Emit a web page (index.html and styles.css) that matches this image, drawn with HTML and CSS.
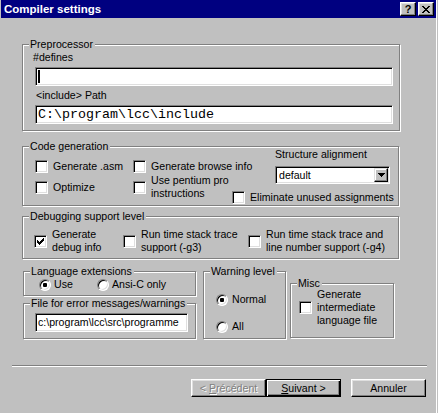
FILE: index.html
```html
<!DOCTYPE html>
<html lang="en">
<head>
    <meta charset="UTF-8">
    <title>Compiler settings</title>
    <link rel="stylesheet" href="styles.css">
</head>
<body>
    <div class="window">
        <div class="titlebar">
            <span class="title">Compiler settings</span>
            <span class="tb-btn help">?</span>
            <span class="tb-btn close">
                <svg width="8" height="7" viewBox="0 0 8 7"><path d="M0 0h2l2 2.5 2-2.5h2l-3 3.5 3 3.5h-2l-2-2.5-2 2.5h-2l3-3.5z"/></svg>
            </span>
        </div>

        <div class="groups">
            <div class="group pre">
                <div class="group-title">Preprocessor</div>
                <div class="group-body">
                    <div class="field-label">#defines</div>
                    <div class="textbox mono"><span class="caret"></span></div>
                    <div class="field-label inc">&lt;include&gt; Path</div>
                    <div class="textbox mono">C:\program\lcc\include</div>
                </div>
            </div>

            <div class="group codegen">
                <div class="group-title">Code generation</div>
                <div class="group-body">
                    <div class="cg-checks">
                        <div class="check-item"><span class="check"></span><span>Generate .asm</span></div>
                        <div class="check-item"><span class="check"></span><span>Generate browse info</span></div>
                        <div class="check-item"><span class="check"></span><span>Optimize</span></div>
                        <div class="check-item"><span class="check"></span><span>Use pentium pro<br>instructions</span></div>
                    </div>
                    <div class="cg-side">
                        <div>Structure alignment</div>
                        <div class="select">
                            <span class="select-value">default</span>
                            <span class="select-btn">
                                <svg width="7" height="4" viewBox="0 0 7 4"><path d="M0 0h7l-3.5 4z"/></svg>
                            </span>
                        </div>
                        <div class="check-item elim"><span class="check"></span><span>Eliminate unused assignments</span></div>
                    </div>
                </div>
            </div>

            <div class="group debug">
                <div class="group-title">Debugging support level</div>
                <div class="group-body">
                    <div class="check-item">
                        <span class="check">
                            <svg width="11" height="11" viewBox="0 0 11 11"><path transform="translate(2 2)" d="M0 2h1v1h1v1h1v-1h1v-1h1v-1h1v-1h1v3h-1v1h-1v1h-1v1h-1v1h-1v-1h-1v-1h-1z"/></svg>
                        </span>
                        <span>Generate<br>debug info</span>
                    </div>
                    <div class="check-item"><span class="check"></span><span>Run time stack trace<br>support (-g3)</span></div>
                    <div class="check-item"><span class="check"></span><span>Run time stack trace and<br>line number support (-g4)</span></div>
                </div>
            </div>

            <div class="bottom-row">
                <div class="left-col">
                    <div class="group lang">
                        <div class="group-title">Language extensions</div>
                        <div class="group-body">
                            <div class="radio-item use"><span class="radio on"></span><span>Use</span></div>
                            <div class="radio-item"><span class="radio"></span><span>Ansi-C only</span></div>
                        </div>
                    </div>
                    <div class="group errfile">
                        <div class="group-title">File for error messages/warnings</div>
                        <div class="group-body">
                            <div class="textbox">c:\program\lcc\src\programme</div>
                        </div>
                    </div>
                </div>

                <div class="group warn">
                    <div class="group-title">Warning level</div>
                    <div class="group-body">
                        <div class="radio-item normal"><span class="radio on"></span><span>Normal</span></div>
                        <div class="radio-item all"><span class="radio"></span><span>All</span></div>
                    </div>
                </div>

                <div class="group misc">
                    <div class="group-title">Misc</div>
                    <div class="group-body">
                        <div class="check-item"><span class="check"></span><span>Generate<br>intermediate<br>language file</span></div>
                    </div>
                </div>
            </div>
        </div>

        <div class="separator"></div>

        <div class="buttons">
            <span class="btn disabled"><span>&lt; <u>P</u>récédent</span></span>
            <span class="btn default"><span><u>S</u>uivant &gt;</span></span>
            <span class="btn cancel"><span>Annuler</span></span>
        </div>
    </div>
</body>
</html>
```

FILE: styles.css
```css
body {
    margin: 0;
    background-color: #c0c0c0;
    font-family: "Liberation Sans", Arial, sans-serif;
    font-size: 10.6px;
    line-height: 13px;
    color: #000;
}
.window {
    width: 437px;
    height: 413px;
    border-right: 1px solid #fff;
    box-sizing: border-box;
    overflow: hidden;
}

/* title bar */
.titlebar {
    margin-left: 1px;
    width: 435px;
    height: 18px;
    background-color: #000080;
    display: flex;
    align-items: center;
    padding: 0 2px 0 3px;
    box-sizing: border-box;
}
.title {
    flex: 1;
    color: #fff;
    font-weight: bold;
    font-size: 11.5px;
}
.tb-btn {
    width: 16px;
    height: 14px;
    box-sizing: border-box;
    background-color: #c0c0c0;
    border: 1px solid;
    border-color: #fff #000 #000 #fff;
    box-shadow: inset -1px -1px #808080, inset 1px 1px #dfdfdf;
    display: flex;
    align-items: center;
    justify-content: center;
    font-weight: bold;
    font-size: 11px;
}
.tb-btn.close {
    margin-left: 2px;
}
.tb-btn svg {
    shape-rendering: crispEdges;
}

/* group boxes */
.groups {
    padding: 26px 0 0 22px;
}
.group {
    border: 1px solid #808080;
    box-shadow: inset 1px 1px #fff, 1px 1px #fff;
    box-sizing: border-box;
}
.group-title {
    width: fit-content;
    margin: -7px 0 0 6px;
    padding: 0 2px 0 1px;
    background-color: #c0c0c0;
    white-space: nowrap;
}
.check-item span,
.radio-item span {
    white-space: nowrap;
}

/* sunken fields */
.textbox {
    height: 19px;
    box-sizing: border-box;
    background-color: #fff;
    border: 1px solid;
    border-color: #808080 #fff #fff #808080;
    box-shadow: inset 1px 1px #000, inset -1px -1px #dfdfdf;
    padding: 0 2px;
    line-height: 17px;
    white-space: nowrap;
    overflow: hidden;
}
.mono {
    font-family: "Liberation Mono", "Courier New", monospace;
    font-size: 13.33px;
}
.caret {
    display: inline-block;
    width: 2px;
    height: 13px;
    background-color: #000;
    vertical-align: middle;
}

.check {
    width: 13px;
    height: 13px;
    flex: none;
    box-sizing: border-box;
    background-color: #fff;
    border: 1px solid;
    border-color: #808080 #fff #fff #808080;
    box-shadow: inset 1px 1px #000, inset -1px -1px #dfdfdf;
    display: flex;
}
.check svg {
    shape-rendering: crispEdges;
}
.check-item {
    display: flex;
    align-items: center;
    gap: 5px;
}

.radio {
    width: 12px;
    height: 12px;
    flex: none;
    box-sizing: border-box;
    border-radius: 50%;
    background-color: #fff;
    border: 1px solid;
    border-color: #808080 #fff #fff #808080;
    box-shadow: inset 1px 1px #000, inset -1px -1px #dfdfdf;
    display: flex;
    align-items: center;
    justify-content: center;
}
.radio.on::after {
    content: "";
    width: 4px;
    height: 4px;
    border-radius: 1px;
    background-color: #000;
}
.radio-item {
    display: flex;
    align-items: center;
    gap: 3px;
}

/* preprocessor */
.pre {
    width: 378px;
}
.pre .group-body {
    padding: 0 6px 6px 10px;
}
.pre .textbox {
    margin: 3px 0 0 2px;
}
.field-label.inc {
    margin: 3px 0 0 3px;
}

/* code generation */
.codegen {
    width: 377px;
    margin-top: 15px;
}
.codegen .group-body {
    display: flex;
    padding: 0 0 1px 12px;
}
.cg-checks {
    display: grid;
    grid-template-columns: 98px 142px;
    grid-template-rows: 13px 26px;
    row-gap: 1px;
    align-items: center;
    margin-top: 7px;
}
.cg-side {
    margin-top: -5px;
}
.select {
    width: 115px;
    height: 18px;
    margin-top: 5px;
    box-sizing: border-box;
    background-color: #fff;
    border: 1px solid;
    border-color: #808080 #fff #fff #808080;
    box-shadow: inset 1px 1px #000, inset -1px -1px #dfdfdf;
    padding: 1px;
    display: flex;
}
.select-value {
    flex: 1;
    padding-left: 2px;
    line-height: 14px;
}
.select-btn {
    width: 14px;
    height: 14px;
    box-sizing: border-box;
    background-color: #c0c0c0;
    border: 1px solid;
    border-color: #dfdfdf #000 #000 #dfdfdf;
    box-shadow: inset -1px -1px #808080, inset 1px 1px #fff;
    display: flex;
    align-items: center;
    justify-content: center;
}
.select-btn svg {
    shape-rendering: crispEdges;
}
.check-item.elim {
    margin: 7px 0 0 -43px;
}

/* debugging */
.debug {
    width: 377px;
    margin-top: 10px;
}
.debug .group-body {
    display: grid;
    grid-template-columns: 89px 125px 1fr;
    align-items: center;
    padding: 5px 0 4px 11px;
}

/* bottom row */
.bottom-row {
    display: flex;
    align-items: flex-start;
    margin: 12px 0 0 1px;
}
.left-col {
    width: 173px;
}
.lang .group-body {
    display: flex;
    padding: 0 0 4px 15px;
}
.radio-item.use {
    width: 58px;
}
.errfile {
    margin-top: 7px;
}
.errfile .group-body {
    padding: 3px 7px 6px 11px;
}
.warn {
    width: 83px;
    margin-left: 7px;
}
.warn .group-body {
    padding: 0 0 5px 12px;
}
.radio-item.normal {
    margin-top: 15px;
    gap: 4px;
}
.radio-item.all {
    margin-top: 14px;
    gap: 4px;
}
.misc {
    width: 104px;
    margin: 12px 0 0 4px;
}
.misc .group-body {
    margin-top: -2px;
    padding: 0 0 10px 8px;
}

/* footer */
.separator {
    width: 415px;
    height: 0;
    margin: 26px 0 0 12px;
    border-top: 1px solid #808080;
    border-bottom: 1px solid #fff;
}
.buttons {
    display: flex;
    justify-content: flex-end;
    padding-right: 10px;
    margin-top: 12px;
}
.btn {
    width: 75px;
    height: 18px;
    box-sizing: border-box;
    border: 1px solid;
    border-color: #fff #000 #000 #fff;
    box-shadow: inset -1px -1px #808080, inset 1px 1px #dfdfdf;
    display: flex;
    align-items: center;
    justify-content: center;
    white-space: nowrap;
}
.btn.disabled {
    color: #808080;
    text-shadow: 1px 1px #fff;
}
.btn.default {
    border-color: #000;
    box-shadow: inset 1px 1px #fff, inset -1px -1px #000, inset -2px -2px #808080;
}
.btn.cancel {
    margin-left: 10px;
}
```
